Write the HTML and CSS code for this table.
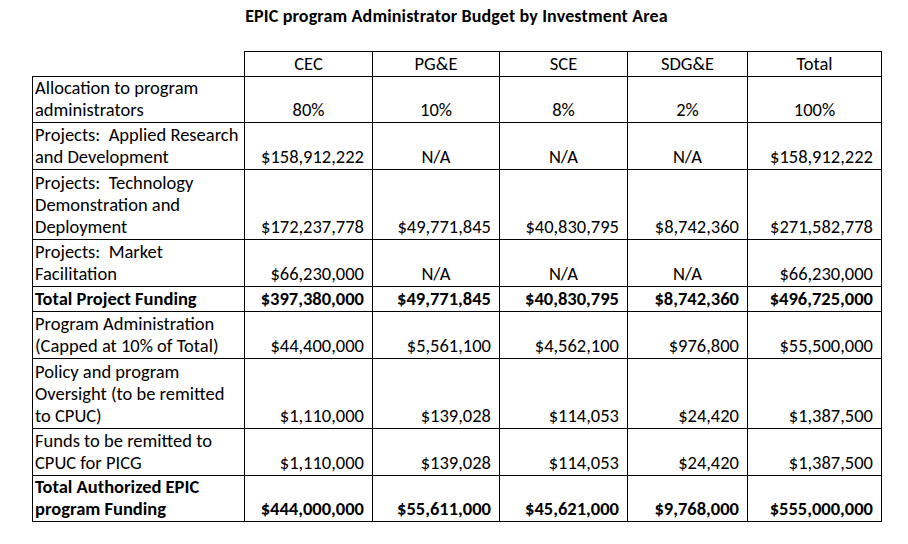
FILE: index.html
```html
<!DOCTYPE html>
<html>
<head>
<meta charset="utf-8">
<link rel="stylesheet" href="styles.css">
</head>
<body>
<div class="page">
  <h1 class="title">EPIC program Administrator Budget by Investment Area</h1>
  <table class="budget">
    <colgroup>
      <col class="c-label"><col class="c-cec"><col class="c-pge"><col class="c-sce"><col class="c-sdge"><col class="c-total">
    </colgroup>
    <tr class="h1 head">
      <td class="blank"></td><td class="ctr">CEC</td><td class="ctr">PG&amp;E</td><td class="ctr">SCE</td><td class="ctr">SDG&amp;E</td><td class="ctr">Total</td>
    </tr>
    <tr class="h2a">
      <td class="lbl">Allocation to program<br>administrators</td><td class="ctr">80%</td><td class="ctr">10%</td><td class="ctr">8%</td><td class="ctr">2%</td><td class="ctr">100%</td>
    </tr>
    <tr class="h2">
      <td class="lbl">Projects:&nbsp; Applied Research<br>and Development</td><td class="num">$158,912,222</td><td class="ctr">N/A</td><td class="ctr">N/A</td><td class="ctr">N/A</td><td class="num">$158,912,222</td>
    </tr>
    <tr class="h3">
      <td class="lbl">Projects:&nbsp; Technology<br>Demonstration and<br>Deployment</td><td class="num">$172,237,778</td><td class="num">$49,771,845</td><td class="num">$40,830,795</td><td class="num">$8,742,360</td><td class="num">$271,582,778</td>
    </tr>
    <tr class="h2">
      <td class="lbl">Projects:&nbsp; Market<br>Facilitation</td><td class="num">$66,230,000</td><td class="ctr">N/A</td><td class="ctr">N/A</td><td class="ctr">N/A</td><td class="num">$66,230,000</td>
    </tr>
    <tr class="h1 bold">
      <td class="lbl">Total Project Funding</td><td class="num">$397,380,000</td><td class="num">$49,771,845</td><td class="num">$40,830,795</td><td class="num">$8,742,360</td><td class="num">$496,725,000</td>
    </tr>
    <tr class="h2">
      <td class="lbl">Program Administration<br>(Capped at 10% of Total)</td><td class="num">$44,400,000</td><td class="num">$5,561,100</td><td class="num">$4,562,100</td><td class="num">$976,800</td><td class="num">$55,500,000</td>
    </tr>
    <tr class="h3">
      <td class="lbl">Policy and program<br>Oversight (to be remitted<br>to CPUC)</td><td class="num">$1,110,000</td><td class="num">$139,028</td><td class="num">$114,053</td><td class="num">$24,420</td><td class="num">$1,387,500</td>
    </tr>
    <tr class="h2">
      <td class="lbl">Funds to be remitted to<br>CPUC for PICG</td><td class="num">$1,110,000</td><td class="num">$139,028</td><td class="num">$114,053</td><td class="num">$24,420</td><td class="num">$1,387,500</td>
    </tr>
    <tr class="h2a bold">
      <td class="lbl">Total Authorized EPIC<br>program Funding</td><td class="num">$444,000,000</td><td class="num">$55,611,000</td><td class="num">$45,621,000</td><td class="num">$9,768,000</td><td class="num">$555,000,000</td>
    </tr>
  </table>
</div>
</body>
</html>
```

FILE: styles.css
```css
html, body {
  margin: 0;
  padding: 0;
  background: #ffffff;
}
body {
  font-family: Carlito, Calibri, Lato, "Liberation Sans", sans-serif;
  color: #000000;
}
.page {
  width: 908px;
  height: 544px;
  padding: 0 0 0 32px;
  box-sizing: border-box;
}
.title {
  margin: 0;
  width: 849px;
  padding-top: 5px;
  height: 51px;
  box-sizing: border-box;
  font-size: 18px;
  letter-spacing: 0.15px;
  line-height: 22px;
  font-weight: bold;
  text-align: center;
}
.budget {
  border-collapse: collapse;
  table-layout: fixed;
  width: 849px;
  font-size: 18.5px;
  line-height: 22px;
}
.c-label { width: 212px; }
.c-cec { width: 128px; }
.c-pge { width: 127px; }
.c-sce { width: 128px; }
.c-sdge { width: 120px; }
.c-total { width: 134px; }
.budget td {
  border: 1px solid #000000;
  padding: 0 2px 1px 2px;
  vertical-align: bottom;
  white-space: nowrap;
}
.budget td.blank {
  border-top: none;
  border-left: none;
}
.h1 { height: 25px; }
.h2a { height: 45px; }
.h2 { height: 47px; }
.h3 { height: 70px; }
.head td { vertical-align: middle; }
.ctr { text-align: center; }
.num { text-align: right; padding-right: 8px !important; }
.lbl { text-align: left; }
.bold td { font-weight: bold; }
```
